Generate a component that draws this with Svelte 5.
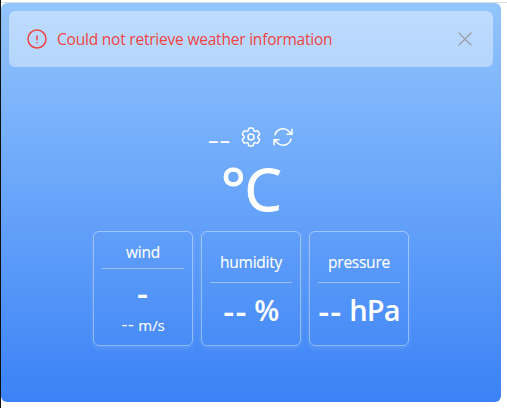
<script>
  const cards = [
    { label: 'humidity', unit: '%' },
    { label: 'pressure', unit: 'hPa' }
  ];
</script>

<div class="page">
  <main>
    <div class="alert">
      <svg class="warn" viewBox="0 0 24 24"><path d="M12 9v3.75m9-.75a9 9 0 1 1-18 0 9 9 0 0 1 18 0Zm-9 3.75h.008v.008H12v-.008Z" /></svg>
      <span class="message">Could not retrieve weather information</span>
      <svg class="close" viewBox="0 0 24 24"><path d="M6 18 18 6M6 6l12 12" /></svg>
    </div>

    <div class="place">
      <span class="city">--</span>
      <svg viewBox="0 0 24 24"><path d="M9.594 3.94c.09-.542.56-.94 1.11-.94h2.593c.55 0 1.02.398 1.11.94l.213 1.281c.063.374.313.686.645.87.074.04.147.083.22.127.325.196.72.257 1.075.124l1.217-.456a1.125 1.125 0 0 1 1.37.49l1.296 2.247a1.125 1.125 0 0 1-.26 1.431l-1.003.827c-.293.241-.438.613-.43.992a7.723 7.723 0 0 1 0 .255c-.008.378.137.75.43.991l1.004.827c.424.35.534.955.26 1.43l-1.298 2.247a1.125 1.125 0 0 1-1.369.491l-1.217-.456c-.355-.133-.75-.072-1.076.124a6.47 6.47 0 0 1-.22.128c-.331.183-.581.495-.644.869l-.213 1.281c-.09.543-.56.94-1.11.94h-2.594c-.55 0-1.019-.398-1.11-.94l-.213-1.281c-.062-.374-.312-.686-.644-.87a6.52 6.52 0 0 1-.22-.127c-.325-.196-.72-.257-1.076-.124l-1.217.456a1.125 1.125 0 0 1-1.369-.49l-1.297-2.247a1.125 1.125 0 0 1 .26-1.431l1.004-.827c.292-.24.437-.613.43-.991a6.932 6.932 0 0 1 0-.255c.007-.38-.138-.751-.43-.992l-1.004-.827a1.125 1.125 0 0 1-.26-1.43l1.297-2.247a1.125 1.125 0 0 1 1.37-.491l1.216.456c.356.133.751.072 1.076-.124.072-.044.146-.086.22-.128.332-.183.582-.495.644-.869l.214-1.28Z" /><path d="M15 12a3 3 0 1 1-6 0 3 3 0 0 1 6 0Z" /></svg>
      <svg viewBox="0 0 24 24"><path d="M16.023 9.348h4.992v-.001M2.985 19.644v-4.992m0 0h4.992m-4.993 0 3.181 3.183a8.25 8.25 0 0 0 13.803-3.7M4.031 9.865a8.25 8.25 0 0 1 13.803-3.7l3.181 3.182m0-4.991v4.99" /></svg>
    </div>

    <div class="temp">°C</div>

    <div class="cards">
      <section class="wind">
        <div class="label">wind</div>
        <div class="value"><span class="dashes">-</span></div>
        <div class="unit"><span class="small-dashes">--</span> m/s</div>
      </section>
      {#each cards as card}
        <section>
          <div class="label">{card.label}</div>
          <div class="value"><span class="dashes">--</span> {card.unit}</div>
        </section>
      {/each}
    </div>
  </main>
</div>

<style>
  .page {
    box-sizing: border-box;
    width: 507px;
    height: 408px;
    padding-top: 2px;
    border-left: 1px solid #111;
    background: linear-gradient(#dcdcdc 0 0) 0 2px / 100% 1px no-repeat #fff;
    font-family: "Segoe UI", "Open Sans", "Noto Sans", sans-serif;
    color: #fff;
    overflow: hidden;
  }
  main {
    box-sizing: border-box;
    width: 500px;
    height: 399px;
    margin-top: 1px;
    padding: 8px;
    border-radius: 6px;
    background: linear-gradient(#93c5fd, #3b82f6);
  }
  svg {
    display: block;
    flex: none;
    width: 24px;
    height: 24px;
    fill: none;
    stroke: currentColor;
    stroke-width: 1.5;
    stroke-linecap: round;
    stroke-linejoin: round;
  }
  .alert {
    box-sizing: border-box;
    display: flex;
    align-items: center;
    height: 56px;
    padding: 0 16px;
    border-radius: 6px;
    background: rgba(255, 255, 255, 0.4);
    color: #ef4444;
  }
  .message {
    flex: 1;
    margin-left: 8px;
    font-size: 15.5px;
    line-height: 24px;
    letter-spacing: -0.21px;
    white-space: nowrap;
  }
  .close { color: #9ca3af; }
  .place {
    display: flex;
    justify-content: center;
    align-items: center;
    gap: 8px;
    height: 32px;
    margin-top: 54px;
  }
  .city {
    width: 24px;
    padding-top: 5px;
    font-size: 24px;
    line-height: 27px;
    text-align: center;
    white-space: nowrap;
    transform: scaleX(1.5);
  }
  .temp {
    height: 72px;
    padding-right: 1px;
    font-size: 59px;
    line-height: 71px;
    letter-spacing: -1.5px;
    -webkit-text-stroke: 0.9px currentColor;
    text-align: center;
  }
  .cards {
    display: flex;
    justify-content: center;
    gap: 8px;
    margin-top: 6px;
  }
  section {
    box-sizing: border-box;
    display: flex;
    flex-direction: column;
    width: 100px;
    height: 115px;
    padding: 18px 8px 0;
    border: 1px solid rgba(255, 255, 255, 0.4);
    border-radius: 6px;
    box-shadow: 0 2px 5px rgba(147, 197, 253, 0.3);
    text-align: center;
    white-space: nowrap;
  }
  .label {
    padding-bottom: 8px;
    border-bottom: 1px solid rgba(255, 255, 255, 0.42);
    font-size: 15.5px;
    line-height: 24px;
    letter-spacing: -0.25px;
    -webkit-text-stroke: 0.12px currentColor;
  }
  .value {
    margin-top: 7px;
    font-size: 29px;
    line-height: 40px;
    font-weight: 600;
    letter-spacing: -0.8px;
  }
  .dashes {
    font-size: 34px;
    line-height: 0;
    vertical-align: -3px;
    letter-spacing: 1.2px;
  }
  .wind { padding-top: 8px; }
  .wind .label { padding-bottom: 4px; }
  .wind .value { margin-top: 3px; }
  .unit {
    margin-top: 1px;
    font-size: 15px;
    line-height: 24px;
    letter-spacing: -0.1px;
    -webkit-text-stroke: 0.12px currentColor;
  }
  .small-dashes {
    font-size: 18px;
    line-height: 0;
    letter-spacing: 0.8px;
    -webkit-text-stroke: 0;
  }
</style>
